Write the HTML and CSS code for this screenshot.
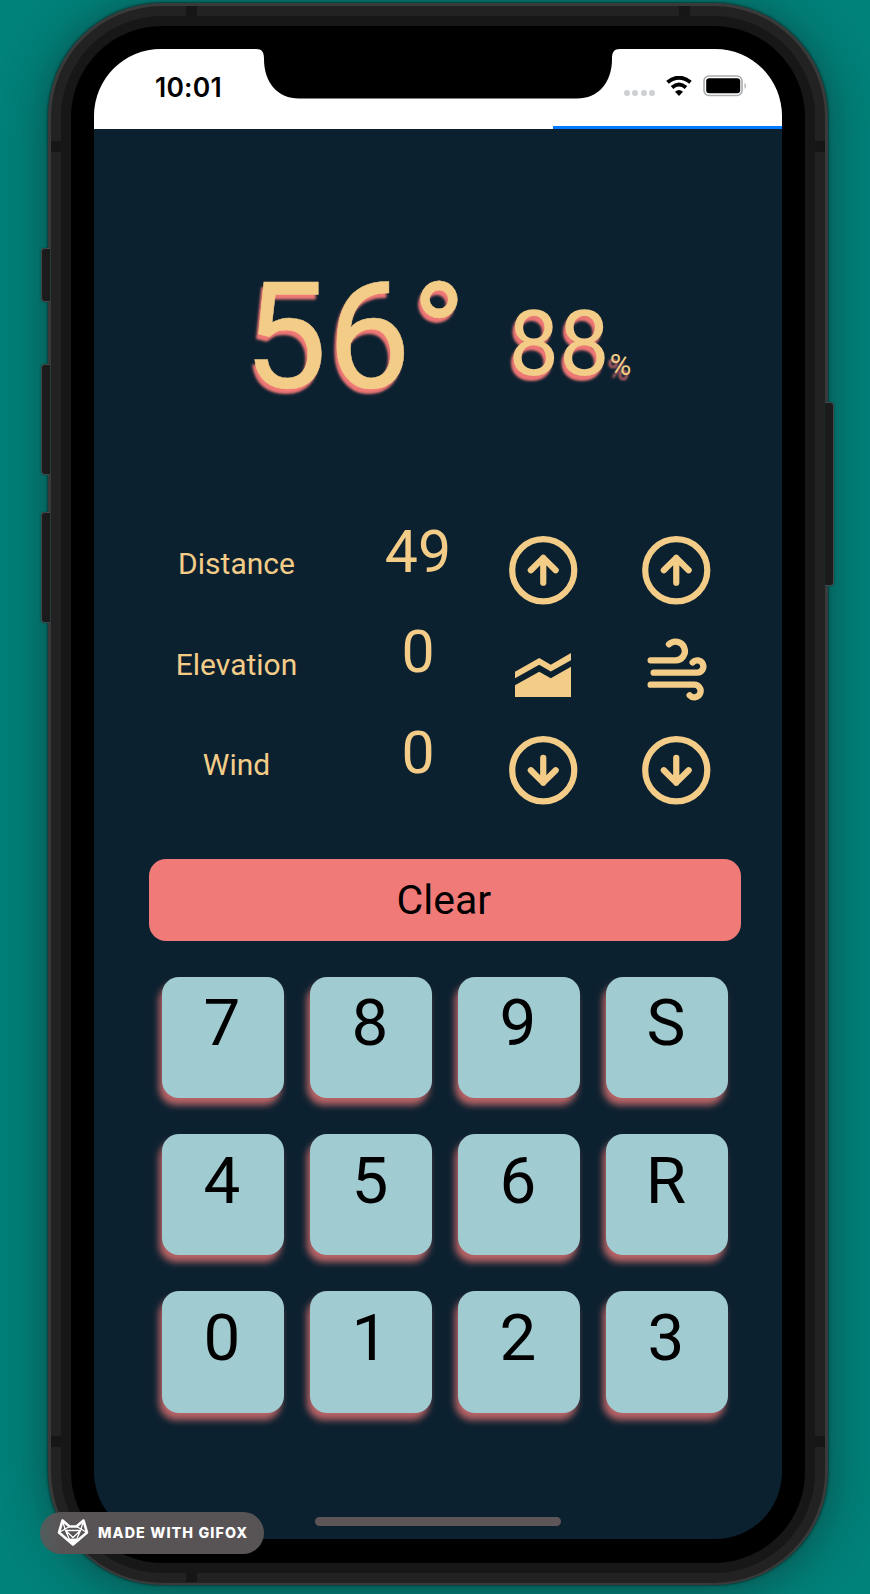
FILE: index.html
```
<!DOCTYPE html>
<html lang="en">
<head>
<meta charset="utf-8">
<title>Range Card</title>
<link rel="stylesheet" href="styles.css">
</head>
<body>
<svg class="defs" width="0" height="0" aria-hidden="true">
  <symbol id="up" viewBox="0 0 24 24"><circle cx="12" cy="12" r="10"/><path d="M16 12l-4-4-4 4M12 16V8"/></symbol>
  <symbol id="down" viewBox="0 0 24 24"><circle cx="12" cy="12" r="10"/><path d="M8 12l4 4 4-4M12 8v8"/></symbol>
</svg>
<div class="phone">
  <i class="button mute"></i><i class="button vol-up"></i><i class="button vol-down"></i><i class="button power"></i>
  <div class="rim"><div class="band"><div class="bezel">
    <main class="screen">
      <header class="status">
        <svg class="notch" width="364" height="50" viewBox="0 0 364 50"><path d="M0 0H364C358 0 356 3 356 10C356 34 342 49.5 321 49.5H43C22 49.5 8 34 8 10C8 3 6 0 0 0Z"/></svg>
        <span class="time">10:01</span>
        <div class="indicators">
          <span class="dots"><i></i><i></i><i></i><i></i></span>
          <svg class="wifi" width="26" height="20" viewBox="0 0 26 20"><path d="M1.500 6.300Q13-3 24.500 6.300M6 11.500Q13 5.500 20 11.500" fill="none" stroke="#000" stroke-width="3.900"/><path d="M9 15.800Q13 12.400 17 15.800L13 19.900Z"/></svg>
          <svg class="battery" width="44" height="22" viewBox="0 0 44 22"><rect x="1" y="1" width="38" height="19.500" rx="5" fill="none" stroke="#a9adb0" stroke-width="1.600"/><rect x="3.200" y="3.300" width="34" height="15" rx="3"/><path d="M41.500 7.500q3 3.300 0 6.500z" fill="#a9adb0"/></svg>
        </div>
        <div class="progress"></div>
      </header>
      <section class="readout"><span class="temp">56°</span><span class="humidity">88<small>%</small></span></section>
      <section class="inputs">
        <span class="label">Distance</span><span class="value">49</span><svg class="line"><use href="#up"/></svg><svg class="line"><use href="#up"/></svg>
        <span class="label">Elevation</span><span class="value">0</span>
        <svg class="chart" viewBox="0 0 56 44"><path d="M0 32.200L24.200 18.700 35.800 25.300 56 13.700V44H0ZM0 18.700L24.200 5 35.800 11.700 56 0V7.200L35.800 18.500 24.200 11.700 0 25.300Z"/></svg>
        <svg class="wind" viewBox="500 410 186 196"><path d="M514 480H588A28 28 0 1 0 569 432M523 517H654A18.500 18.500 0 1 0 640 486M514 553H644A19 19 0 1 1 631 585"/></svg>
        <span class="label">Wind</span><span class="value">0</span><svg class="line"><use href="#down"/></svg><svg class="line"><use href="#down"/></svg>
      </section>
      <button class="clear">Clear</button>
      <section class="keypad">
        <button>7</button><button>8</button><button>9</button><button>S</button>
        <button>4</button><button>5</button><button>6</button><button>R</button>
        <button>0</button><button>1</button><button>2</button><button>3</button>
      </section>
      <div class="home"></div>
    </main>
  </div></div></div>
  <i class="antenna h a1"></i><i class="antenna h a2"></i><i class="antenna h a3"></i>
  <i class="antenna v a4"></i><i class="antenna v a5"></i><i class="antenna v a6"></i><i class="antenna v a7"></i>
</div>
<div class="badge">
  <svg width="32" height="28" viewBox="0 0 32 28" fill="none" stroke="#fff" stroke-width="1.300" stroke-linejoin="round"><path stroke-width="2.600" d="M5.500 1.500L2 13.500 16 25.500 30 13.500 26.500 1.500 19.500 7.500H12.500Z"/><path d="M5.500 2L8.500 11.500 12.500 20.500H19.500L23.500 11.500 26.500 2M8.500 11.500H23.500M12.500 7.500L2 13.500M19.500 7.500L30 13.500M8.500 11.500L16 18.500 23.500 11.500"/><path fill="#fff" d="M11.500 20.500H20.500L16 25.500Z"/></svg>
  <span>MADE WITH GIFOX</span>
</div>
</body>
</html>
```
FILE: styles.css
```
* { box-sizing: border-box; }
body { margin: 0; height: 1594px; overflow: hidden; position: relative; background: #008179; font-family: Roboto, sans-serif; padding: 3px 0 0 48px; }
.defs { display: block; position: absolute; }
.phone { position: relative; width: 780px; height: 1582px; padding: 3px 3px 2px 3px; border-radius: 114px; background: #393b3b; box-shadow: 0 0 2px 1px #053f3d, 0 4px 44px 2px rgba(18, 40, 38, .55); }
.rim { height: 1577px; padding: 10px 10px; border-radius: 111px; background: #222; }
.band { height: 1557px; padding: 10px; border-radius: 101px; background: #171717; }
.bezel { height: 1537px; padding: 23px; border-radius: 91px; background: #000; }
.screen { width: 688px; height: 1490px; border-radius: 67px; overflow: hidden; background: #0c2130; position: relative; display: flex; flex-direction: column; }
.status { height: 80px; flex: none; background: #fff; position: relative; display: flex; justify-content: space-between; align-items: flex-start; padding: 0 35px 0 61px; }
.notch { position: absolute; left: 162px; top: 0; }
.time { font: 600 26.5px/32px Inter, sans-serif; padding-top: 21.500px; letter-spacing: .2px; }
.indicators { display: flex; align-items: center; padding-top: 26px; }
.dots { display: flex; gap: 2.500px; padding-top: 14px; margin-right: 11px; }
.dots i { width: 6px; height: 6px; border-radius: 50%; background: #cdd0d2; }
.battery { margin-left: 11px; }
.progress { position: absolute; right: 0; bottom: 0; width: 229px; height: 3px; background: #007aff; }
.readout { height: 345px; flex: none; display: flex; align-items: baseline; color: #f3cd88; padding: 122px 0 0 149.500px; text-shadow: -2.500px 4.500px 2.500px #f07876; }
.temp { font-size: 149px; line-height: 172px; width: 265px; -webkit-text-stroke: .5px #f3cd88; }
.humidity { font-size: 90px; line-height: 100px; position: relative; top: -13px; }
.humidity small { font-size: 29.500px; }
.inputs { height: 301px; flex: none; display: grid; grid-template-columns: 228px 126px 133px 133px; grid-template-rows: repeat(3, 100.300px); margin: -2px 0 0 29px; justify-items: center; color: #f3cd88; }
.label { font-size: 30px; line-height: 34px; padding-top: 75.300px; margin-left: -1px; }
.value { font-size: 59px; line-height: 70px; padding-top: 45px; margin-left: 8px; }
.line { width: 74.500px; height: 74.500px; margin-top: 60.500px; fill: none; stroke: #f3cd88; stroke-width: 2; stroke-linecap: round; stroke-linejoin: round; }
.chart { width: 56px; height: 44px; margin: 81px 1.500px 0 0; fill: #f3cd88; }
.wind { width: 62px; height: 65.300px; margin: 64.500px 0 0 1.500px; fill: none; stroke: #f3cd88; stroke-width: 19; stroke-linecap: round; }
button { border: 0; padding: 0; font-family: inherit; color: #000; }
.clear { flex: none; width: 592px; height: 82px; margin: 86px 0 0 54.800px; padding-right: 2px; border-radius: 17px; background: #f07a78; font-size: 41px; line-height: 81px; }
.keypad { display: grid; grid-template-columns: repeat(4, 121.500px); gap: 35.800px 26.500px; margin: 35.700px 0 0 68px; }
.keypad button { height: 121.500px; padding: 0 1.500px 28px 0; border-radius: 17px; background: #a0cbd1; font-size: 65.500px; line-height: 76px; box-shadow: -3px 7px 7px rgba(240, 122, 120, .76); }
.home { width: 246px; height: 9px; border-radius: 5px; background: #5d5558; margin: auto 0 13px 221px; }
.button { position: absolute; left: -7px; width: 9px; border: 1.500px solid #46494b; border-right: 0; border-radius: 4px 0 0 4px; background: #1b1b1b; box-shadow: 0 0 2px #053f3d; }
.mute { top: 245px; height: 54px; }
.vol-up { top: 361px; height: 111px; }
.vol-down { top: 509px; height: 111px; }
.power { left: auto; right: -6px; top: 399px; height: 184px; border: 1.500px solid #46494b; border-left: 0; border-radius: 0 4px 4px 0; }
.antenna { position: absolute; background: #161616; }
.h { width: 11px; height: 10px; top: 3px; }
.v { width: 10px; height: 11px; left: 3px; top: 138px; }
.a1, .a3 { left: 138px; }
.a2 { left: 631px; }
.a3 { top: 1569px; }
.a5, .a7 { left: 767px; }
.a6, .a7 { top: 1433px; }
.badge { position: absolute; left: 40px; top: 1512px; width: 224px; height: 42px; border-radius: 21px; background: linear-gradient(90deg, #505d5c, #585456 20px); display: flex; align-items: center; padding-left: 17px; color: #fff; font: 800 14.300px/20px Inter, sans-serif; }
.badge svg { margin-right: 9px; }
.badge span { white-space: nowrap; letter-spacing: 1.100px; }
```
